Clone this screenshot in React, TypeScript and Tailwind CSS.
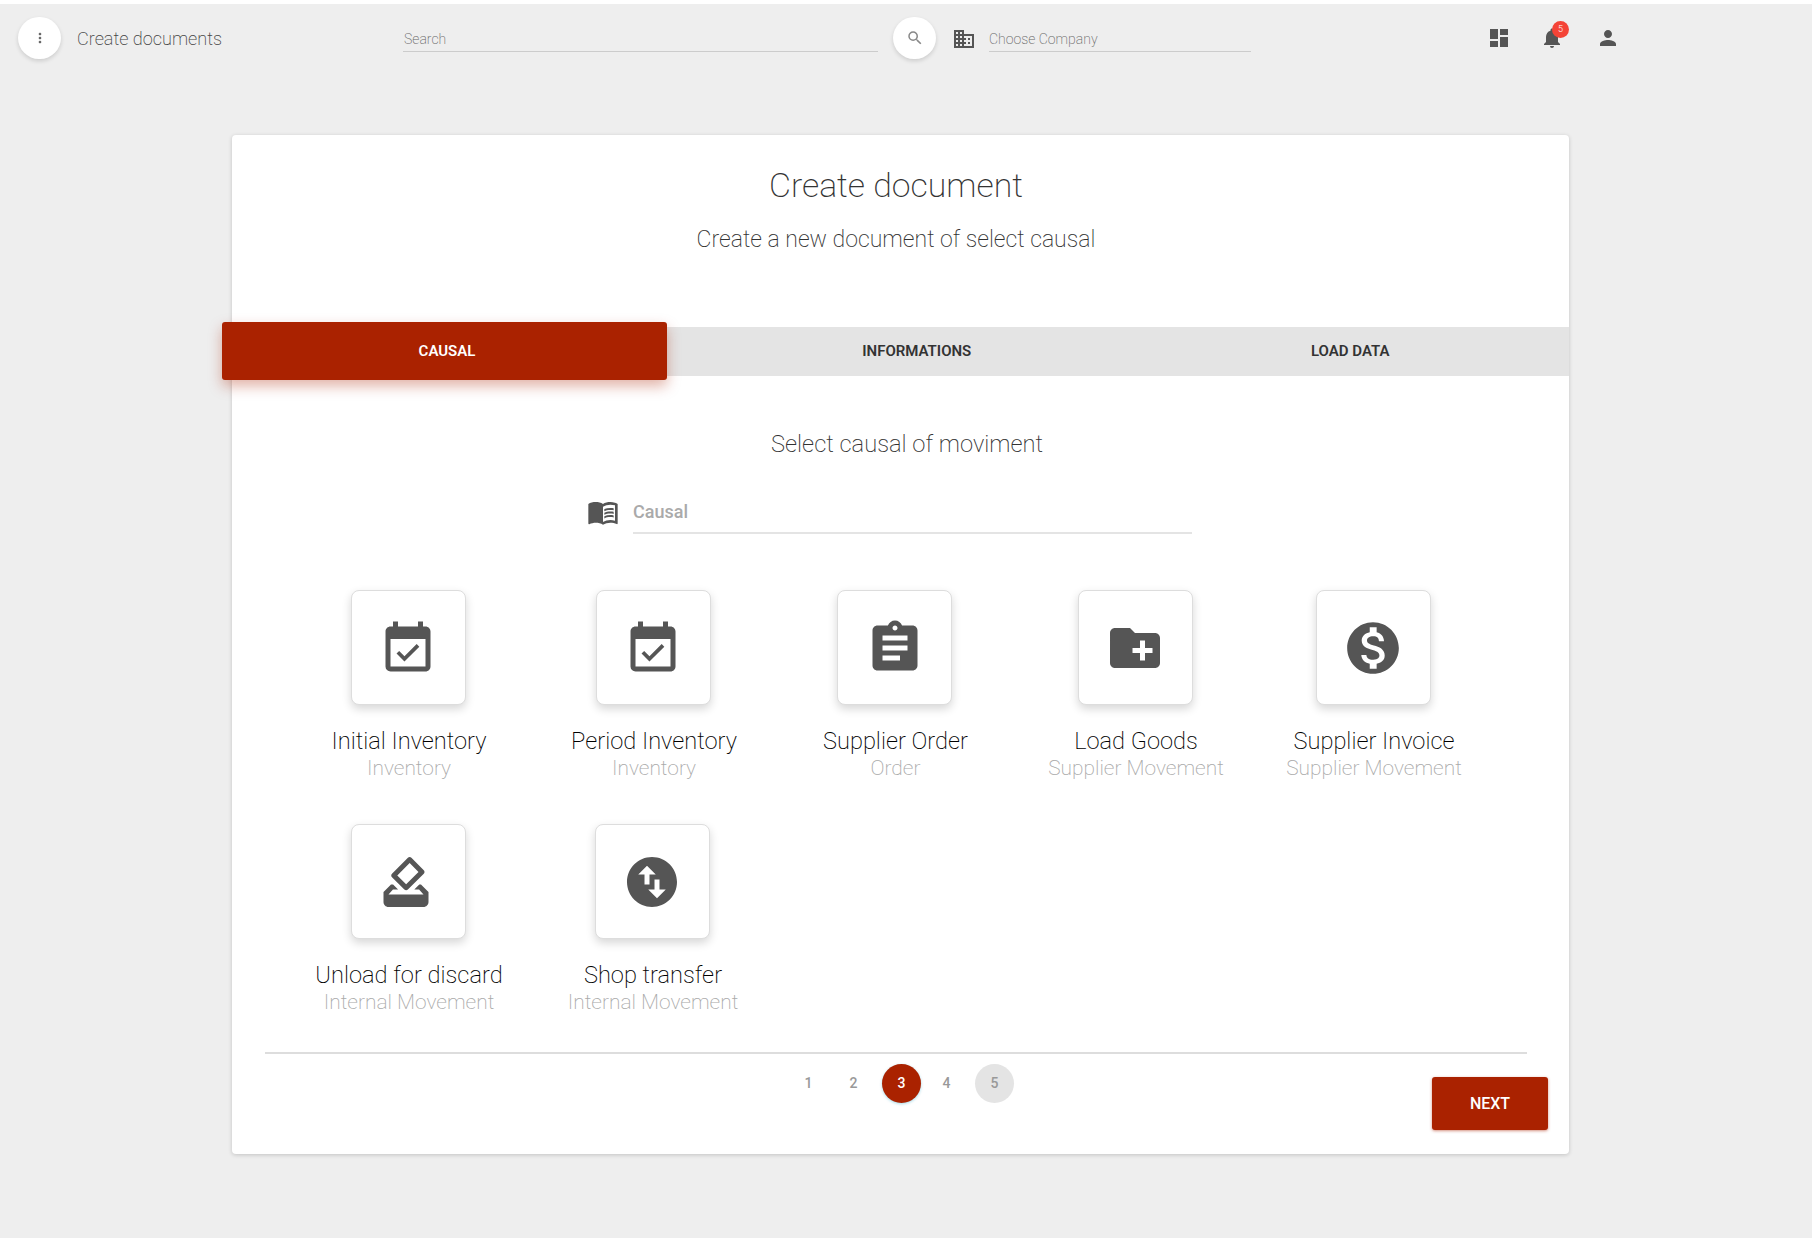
import type { ReactNode } from 'react'
import {
  MdAssignment,
  MdBusiness,
  MdCreateNewFolder,
  MdDashboard,
  MdEventAvailable,
  MdMenuBook,
  MdMonetizationOn,
  MdMoreVert,
  MdNotifications,
  MdPerson,
  MdSearch,
  MdSwapVerticalCircle,
} from 'react-icons/md'

function VoteIcon() {
  return (
    <svg viewBox="0 0 24 24" width={60} height={60} fill="currentColor" className="-translate-x-[2px]">
      <path d="M18 13h-.68l-2 2h1.91L19 17H5l1.78-2h2.05l-2-2H6l-3 3v4c0 1.1.89 2 1.99 2H19c1.1 0 2-.89 2-2v-4l-3-3zm-1-5.05l-4.95 4.95-3.54-3.54 4.95-4.95L17 7.95zm-4.24-5.66L6.39 8.66c-.39.39-.39 1.02 0 1.41l4.95 4.95c.39.39 1.02.39 1.41 0l6.36-6.36c.39-.39.39-1.02 0-1.41L14.16 2.3c-.38-.4-1.01-.4-1.4-.01z" />
    </svg>
  )
}

const firstRow = [
  { title: 'Initial Inventory', sub: 'Inventory', icon: <MdEventAvailable size={60} className="translate-y-[1px]" /> },
  { title: 'Period Inventory', sub: 'Inventory', icon: <MdEventAvailable size={60} className="translate-y-[1px]" /> },
  { title: 'Supplier Order', sub: 'Order', icon: <MdAssignment size={60} /> },
  { title: 'Load Goods', sub: 'Supplier Movement', icon: <MdCreateNewFolder size={60} /> },
  { title: 'Supplier Invoice', sub: 'Supplier Movement', icon: <MdMonetizationOn size={62} /> },
]

function CausalTile({ title, sub, icon, className = '' }: { title: string; sub: string; icon: ReactNode; className?: string }) {
  return (
    <div className={`flex flex-col items-center ${className}`}>
      <div className="mr-[2px] flex h-[115px] w-[115px] items-center justify-center rounded-[8px] border border-[#dddddd] bg-white text-[#555555] shadow-[0_4px_10px_rgba(0,0,0,0.16)]">
        {icon}
      </div>
      <div className="mt-[22px] whitespace-nowrap text-[23.6px] leading-[29px] font-extralight text-[#000000]">{title}</div>
      <div className="whitespace-nowrap text-[20.9px] leading-[24px] font-extralight text-[#aaaaaa]">{sub}</div>
    </div>
  )
}

function RoundButton({ children }: { children: ReactNode }) {
  return (
    <button className="flex h-[42px] w-[43px] shrink-0 items-center justify-center rounded-full bg-white text-[#888888] shadow-[0_2px_4px_rgba(0,0,0,0.14)]">
      {children}
    </button>
  )
}

function PageDot({ n, className }: { n: number; className: string }) {
  return (
    <div className={`flex h-[39px] w-[39px] items-center justify-center rounded-full text-[14px] font-medium ${className}`}>
      {n}
    </div>
  )
}

export default function App() {
  return (
    <div className="min-h-[1238px] bg-[#eeeeee] font-[family-name:Roboto,sans-serif]">
      <div className="h-[4px] bg-white" />

      <header className="flex h-[68px] items-center pl-[18px]">
        <RoundButton>
          <MdMoreVert size={16} className="text-[#666666]" />
        </RoundButton>
        <div className="ml-[16px] mt-[2px] w-[326px] text-[18.1px] font-extralight text-[#444444]">Create documents</div>
        <div className="flex h-[28px] w-[475px] items-end border-b border-[#cccccc] pb-[1px] text-[14px] font-extralight text-[#666666]">
          <span className="pl-px">Search</span>
        </div>
        <div className="ml-[15px]">
          <RoundButton>
            <MdSearch size={18} />
          </RoundButton>
        </div>
        <MdBusiness size={24} className="ml-[16px] mt-[2px] text-[#555555]" />
        <div className="ml-[13px] flex h-[28px] w-[262px] items-end border-b border-[#cccccc] pb-[1px] text-[14px] font-extralight text-[#666666]">
          Choose Company
        </div>
        <MdDashboard size={24} className="ml-[236px] text-[#555555]" />
        <div className="relative ml-[29px] text-[#555555]">
          <MdNotifications size={24} />
          <span className="absolute -top-[5px] left-[12px] flex h-[17px] w-[17px] items-center justify-center rounded-full bg-[#f44336] text-[9px] font-light text-white">
            5
          </span>
        </div>
        <MdPerson size={24} className="ml-[32px] text-[#555555]" />
      </header>

      <main className="ml-[232px] mt-[63px] h-[1019px] w-[1337px] rounded-[4px] bg-white shadow-[0_1px_4px_rgba(0,0,0,0.18)]">
        <div className="pr-[9px] text-center">
          <h1 className="pt-[28px] text-[33.8px] leading-[46px] font-extralight text-[#333333]">Create document</h1>
          <p className="mt-[15px] text-[23px] leading-[32px] font-extralight text-[#333333]">
            Create a new document of select causal
          </p>
        </div>

        <div className="mt-[71px] flex h-[49px] bg-[#e4e4e4]">
          <div className="-my-[5px] -ml-[10px] flex h-[58px] w-[445px] items-center justify-center rounded-[3px] bg-[#aa2200] pl-[5px] text-[15px] font-semibold text-white shadow-[0_6px_14px_rgba(170,34,0,0.35)]">
            CAUSAL
          </div>
          <div className="flex flex-1 pl-[33px] text-[15px] font-semibold text-[#333333]">
            <div className="flex flex-1 items-center justify-center">INFORMATIONS</div>
            <div className="flex flex-1 items-center justify-center pr-[2px]">LOAD DATA</div>
          </div>
        </div>

        <div className="mt-[52px] pl-[13px] text-center text-[23.7px] leading-[32px] font-extralight text-[#333333]">
          Select causal of moviment
        </div>

        <div className="ml-[355px] mt-[30px] flex items-center">
          <MdMenuBook size={32} className="text-[#555555]" />
          <div className="ml-[14px] flex h-[44px] w-[559px] items-center border-b-2 border-[#e4e4e4] text-[18px] font-medium text-[#aaaaaa]">
            Causal
          </div>
        </div>

        <div className="ml-[55px] mt-[56px] grid grid-cols-[244px_246px_237px_244px_232px] gap-y-[44px]">
          {firstRow.map((item) => (
            <CausalTile key={item.title} {...item} />
          ))}
          <CausalTile title="Unload for discard" sub="Internal Movement" icon={<VoteIcon />} />
          <CausalTile
            title="Shop transfer"
            sub="Internal Movement"
            icon={<MdSwapVerticalCircle size={60} />}
            className="mr-[2px]"
          />
        </div>

        <div className="ml-[33px] mt-[38px] h-[2px] w-[1262px] bg-[#dddddd]" />

        <div className="flex items-start">
          <div className="ml-[557px] mt-[10px] flex gap-[6px] text-[#999999]">
            <PageDot n={1} className="" />
            <PageDot n={2} className="" />
            <PageDot n={3} className="ml-[3px] bg-[#aa2200] text-white shadow-[0_1px_3px_rgba(0,150,190,0.35)]" />
            <PageDot n={4} className="" />
            <PageDot n={5} className="ml-[3px] bg-[#e4e4e4]" />
          </div>
          <button className="ml-[418px] mt-[23px] flex h-[53px] w-[116px] items-center justify-center rounded-[3px] bg-[#aa2200] text-[16px] font-medium text-white shadow-[0_1px_3px_rgba(170,34,0,0.5)]">
            NEXT
          </button>
        </div>
      </main>
    </div>
  )
}
